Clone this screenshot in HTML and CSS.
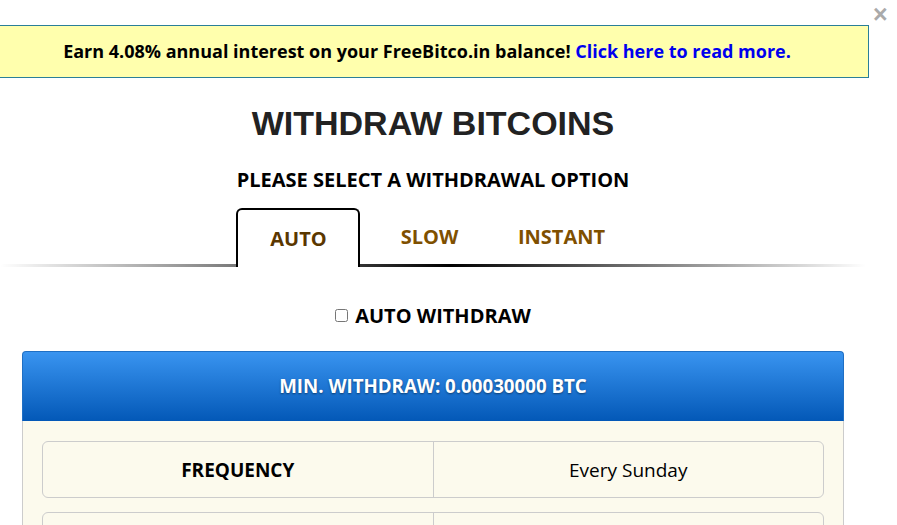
FILE: index.html
```html
<!DOCTYPE html>
<html>
<head>
<meta charset="utf-8">
<link rel="stylesheet" href="styles.css">
</head>
<body>
<div class="modal">
  <a class="close" href="#">&#215;</a>
  <div class="banner">Earn 4.08% annual interest on your FreeBitco.in balance! <a class="banner-link" href="#">Click here to read more.</a></div>
  <h1 class="title">WITHDRAW BITCOINS</h1>
  <h2 class="subtitle">PLEASE SELECT A WITHDRAWAL OPTION</h2>
  <div class="tabs-wrap">
    <ul class="tabs">
      <li class="tab active">AUTO</li>
      <li class="tab">SLOW</li>
      <li class="tab">INSTANT</li>
    </ul>
  </div>
  <div class="auto-check">
    <input type="checkbox" id="auto_withdraw" class="check">
    <label for="auto_withdraw" class="check-label">AUTO WITHDRAW</label>
  </div>
  <div class="panel">
    <div class="panel-head">MIN. WITHDRAW: 0.00030000 BTC</div>
    <div class="panel-body">
      <div class="row">
        <div class="cell key">FREQUENCY</div>
        <div class="cell value">Every Sunday</div>
      </div>
      <div class="row">
        <div class="cell key"></div>
        <div class="cell value"></div>
      </div>
    </div>
  </div>
</div>
</body>
</html>
```
FILE: styles.css
```css
html, body {
  margin: 0;
  padding: 0;
  background: #fff;
}
body {
  font-family: "Open Sans", "Liberation Sans", sans-serif;
  color: #000;
  overflow: hidden;
}
.modal {
  position: relative;
  width: 866px;
  padding-top: 25px;
}
.close {
  position: absolute;
  top: 0;
  left: 873px;
  font-family: "Liberation Sans", Arial, sans-serif;
  font-size: 25px;
  font-weight: bold;
  line-height: 28px;
  color: #aaa;
  text-decoration: none;
}
.banner {
  width: 869px;
  box-sizing: border-box;
  height: 53px;
  border: 1px solid #2a7f98;
  border-left: 0;
  background: #ffffad;
  font-size: 18px;
  font-weight: bold;
  line-height: 51px;
  text-align: center;
  padding-right: 14px;
}
.banner-link {
  color: #0000ee;
  text-decoration: none;
}
.title {
  margin: 26px 0 0;
  font-family: "Liberation Sans", Arial, sans-serif;
  font-size: 34px;
  line-height: 39px;
  font-weight: bold;
  color: #222;
  text-align: center;
}
.subtitle {
  margin: 23px 0 0;
  font-size: 20px;
  line-height: 27px;
  font-weight: bold;
  text-align: center;
}
.tabs-wrap {
  position: relative;
  margin-top: 15px;
}
.tabs-wrap::after {
  content: "";
  position: absolute;
  left: 0;
  right: 0;
  bottom: 0;
  height: 3px;
  background: linear-gradient(to right, rgba(0,0,0,0) 0%, #000 52%, rgba(0,0,0,0) 100%);
}
.tabs {
  list-style: none;
  margin: 0;
  padding: 0 7px 0 0;
  display: flex;
  justify-content: center;
  gap: 8px;
}
.tab {
  position: relative;
  z-index: 1;
  width: 124px;
  height: 59px;
  box-sizing: border-box;
  border: 2px solid transparent;
  border-bottom: 0;
  padding-bottom: 4px;
  display: flex;
  align-items: center;
  justify-content: center;
  font-size: 20px;
  font-weight: bold;
  color: #7f5000;
}
.tab.active {
  border-color: #000;
  border-radius: 6px 6px 0 0;
  background: #fff;
  padding-bottom: 0;
  padding-left: 2px;
  color: #5a3700;
}
.auto-check {
  display: flex;
  align-items: center;
  justify-content: center;
  margin-top: 35px;
  height: 27px;
}
.check {
  margin: 0 7px 0 0;
  width: 13px;
  height: 13px;
}
.check-label {
  font-size: 20px;
  font-weight: bold;
}
.panel {
  margin: 22px 22px 0;
}
.panel-head {
  height: 70px;
  box-sizing: border-box;
  border-radius: 4px 4px 0 0;
  border: 1px solid #1f6fc4;
  border-bottom: 0;
  background: linear-gradient(to bottom, #3994f0 0%, #0358b7 100%);
  color: #fff;
  font-size: 18.7px;
  font-weight: bold;
  line-height: 68px;
  text-align: center;
  text-shadow: 0 1px 2px rgba(0,0,0,0.45);
}
.panel-body {
  background: #fcfaed;
  border: 1px solid #ccc;
  border-top: 0;
  padding: 20px 19px;
  display: flex;
  flex-direction: column;
  gap: 14px;
}
.row {
  display: flex;
  height: 57px;
  box-sizing: border-box;
  border: 1px solid #ccc;
  border-radius: 6px;
}
.cell {
  flex: 1;
  display: flex;
  align-items: center;
  justify-content: center;
  font-size: 19px;
}
.key {
  font-weight: bold;
  border-right: 1px solid #ccc;
}
.value {
  font-weight: normal;
}
```
